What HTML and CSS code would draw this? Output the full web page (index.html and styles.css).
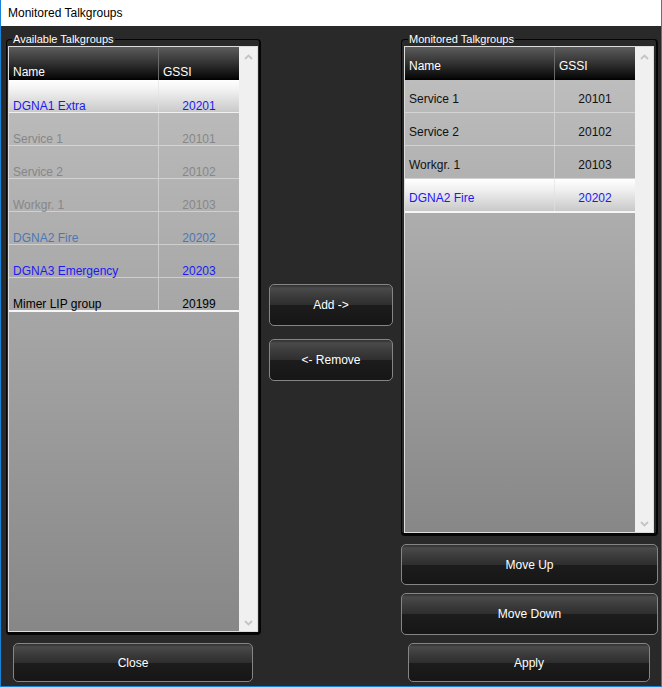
FILE: index.html
```html
<!DOCTYPE html>
<html>
<head>
<meta charset="utf-8">
<link rel="stylesheet" href="styles.css">
</head>
<body>
<div class="window">
  <div class="titlebar">Monitored Talkgroups</div>
  <div class="content">
    <div class="col col-left">
      <fieldset class="group group-left">
        <legend>Available Talkgroups</legend>
        <div class="list list-avail">
          <div class="table">
            <div class="head">
              <div class="c name">Name</div>
              <div class="c gssi">GSSI</div>
            </div>
            <div class="body">
              <div class="row sel blue"><div class="c name">DGNA1 Extra</div><div class="c val">20201</div></div>
              <div class="row dis"><div class="c name">Service 1</div><div class="c val">20101</div></div>
              <div class="row dis"><div class="c name">Service 2</div><div class="c val">20102</div></div>
              <div class="row dis"><div class="c name">Workgr. 1</div><div class="c val">20103</div></div>
              <div class="row steel"><div class="c name">DGNA2 Fire</div><div class="c val">20202</div></div>
              <div class="row blue"><div class="c name">DGNA3 Emergency</div><div class="c val">20203</div></div>
              <div class="row last"><div class="c name">Mimer LIP group</div><div class="c val">20199</div></div>
            </div>
          </div>
          <div class="scroll">
            <svg width="9" height="6" viewBox="0 0 9 6"><path d="M1 5 L4.5 1.5 L8 5" fill="none" stroke="#c4c4c4" stroke-width="1.8"/></svg>
            <svg width="9" height="6" viewBox="0 0 9 6"><path d="M1 1 L4.5 4.5 L8 1" fill="none" stroke="#c4c4c4" stroke-width="1.8"/></svg>
          </div>
        </div>
      </fieldset>
      <button class="btn btn-bottom">Close</button>
    </div>

    <div class="col col-mid">
      <button class="btn btn-mid">Add -&gt;</button>
      <button class="btn btn-mid">&lt;- Remove</button>
    </div>

    <div class="col col-right">
      <fieldset class="group group-right">
        <legend>Monitored Talkgroups</legend>
        <div class="list list-mon">
          <div class="table">
            <div class="head">
              <div class="c name">Name</div>
              <div class="c gssi">GSSI</div>
            </div>
            <div class="body">
              <div class="row"><div class="c name">Service 1</div><div class="c val">20101</div></div>
              <div class="row"><div class="c name">Service 2</div><div class="c val">20102</div></div>
              <div class="row"><div class="c name">Workgr. 1</div><div class="c val">20103</div></div>
              <div class="row sel blue last"><div class="c name">DGNA2 Fire</div><div class="c val">20202</div></div>
            </div>
          </div>
          <div class="scroll">
            <svg width="9" height="6" viewBox="0 0 9 6"><path d="M1 5 L4.5 1.5 L8 5" fill="none" stroke="#c4c4c4" stroke-width="1.8"/></svg>
            <svg width="9" height="6" viewBox="0 0 9 6"><path d="M1 1 L4.5 4.5 L8 1" fill="none" stroke="#c4c4c4" stroke-width="1.8"/></svg>
          </div>
        </div>
      </fieldset>
      <button class="btn btn-wide btn-up">Move Up</button>
      <button class="btn btn-wide btn-down">Move Down</button>
      <button class="btn btn-bottom">Apply</button>
    </div>
  </div>
</div>
</body>
</html>
```

FILE: styles.css
```css
* { box-sizing: border-box; }

html, body {
  margin: 0;
  padding: 0;
  background: #292929;
}

body {
  font-family: "Liberation Sans", Arial, sans-serif;
  font-size: 12px;
}

.window {
  width: 662px;
  height: 687px;
  border: 1px solid #1883d7;
  border-top: 0;
  background: #292929;
  display: flex;
  flex-direction: column;
}

.titlebar {
  height: 26px;
  flex: none;
  background: #ffffff;
  color: #000;
  font-size: 12px;
  line-height: 26px;
  padding-left: 7px;
}

.content {
  flex: 1;
  display: flex;
  gap: 8px;
  padding: 7px 3px 4px 5px;
}

.col {
  display: flex;
  flex-direction: column;
  gap: 8px;
}

.col-left { width: 255px; }
.col-mid { width: 124px; padding-top: 251px; gap: 13px; }
.col-right { width: 257px; }

.group {
  flex: 1;
  min-height: 0;
  min-width: 0;
  margin: 0;
  border-style: solid;
  border-color: #050505;
  border-width: 1px 2px 3px 1px;
  border-radius: 4px;
  display: flex;
  flex-direction: column;
}

.group-left { padding: 0 1px 0 1px; }
.group-right { padding: 0 2px 0 2px; }

.group legend {
  color: #ffffff;
  font-size: 11px;
  line-height: 13px;
  padding: 0 1px;
  margin-left: 4px;
}

.list {
  flex: 1;
  min-height: 0;
  display: flex;
  border: 1px solid #dcdcdc;
}

.table {
  width: 230px;
  display: flex;
  flex-direction: column;
}

.head {
  height: 33px;
  flex: none;
  display: flex;
  background: linear-gradient(to bottom, #5c5c5c 0%, #3a3a3a 40%, #0c0c0c 90%, #000 100%);
  color: #ffffff;
}

.head .c { line-height: 14px; padding-left: 4px; }
.head .name { width: 150px; border-right: 1px solid #6a6a6a; }
.head .gssi { flex: 1; }

.list-avail .head .c { padding-top: 18px; }
.list-mon .head .c { padding-top: 12px; }

.body {
  flex: 1;
  background: linear-gradient(to bottom, #bdbdbd 0%, #878787 100%);
}

.row {
  height: 33px;
  display: flex;
  border-bottom: 1px solid rgba(230, 230, 230, 0.6);
  color: #111;
}

.row .c { line-height: 14px; }
.row .name { width: 150px; padding-left: 4px; border-right: 1px solid rgba(225, 225, 225, 0.6); white-space: nowrap; }
.row .val { flex: 1; text-align: center; }

.list-avail .row .c { padding-top: 19px; }
.list-mon .row .c { padding-top: 12px; }

.row.sel {
  background: linear-gradient(to bottom, #ffffff 0%, #f2f2f2 30%, #c9c9c9 100%);
}

.row.last { border-bottom: 2px solid #f6f6f6; height: 34px; }

.row.blue { color: #1a1af5; }
.row.dis { color: #878787; }
.row.steel { color: #4a78b6; }
.row.last:not(.blue) { color: #000; }

.scroll {
  width: 18px;
  background: #f0f0f0;
  display: flex;
  flex-direction: column;
  justify-content: space-between;
  align-items: center;
  padding: 7px 0 5px 0;
}

.scroll svg { display: block; }

.btn {
  font-family: "Liberation Sans", Arial, sans-serif;
  font-size: 12px;
  color: #ffffff;
  border: 1px solid #858585;
  border-radius: 5px;
  background: linear-gradient(to bottom, #303030 0%, #4a4a4a 8%, #3a3a3a 30%, #2e2e2e 50%, #1c1c1c 51%, #161616 100%);
  padding: 0;
  margin: 0;
  flex: none;
}

.btn-mid { height: 42px; }
.btn-up { height: 41px; }
.btn-down { height: 42px; }
.btn-bottom { height: 39px; margin: 0 8px 0 7px; }
```
